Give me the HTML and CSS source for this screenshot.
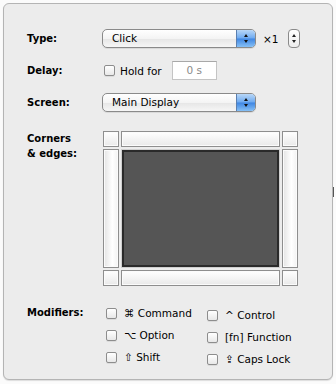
FILE: index.html
```html
<!DOCTYPE html>
<html lang="en">
<head>
    <meta charset="UTF-8">
    <title>Action settings</title>
    <link rel="stylesheet" href="styles.css">
</head>
<body>
    <div class="panel">
        <div class="row row-type">
            <div class="label">Type:</div>
            <div class="field">
                <div class="popup popup-type">
                    <span class="popup-text">Click</span>
                    <span class="popup-arrows">
                        <svg width="18" height="17" viewBox="0 0 18 17"><polygon points="7,7 11,7 9,4" fill="#111"/><polygon points="7,10 11,10 9,13" fill="#111"/></svg>
                    </span>
                </div>
                <span class="count">×1</span>
                <div class="stepper">
                    <svg width="10" height="17" viewBox="0 0 10 17"><polygon points="3,7 7,7 5,4" fill="#222"/><polygon points="3,10 7,10 5,13" fill="#222"/></svg>
                </div>
            </div>
        </div>

        <div class="row row-delay">
            <div class="label">Delay:</div>
            <div class="field">
                <span class="checkbox"></span>
                <span class="hold">Hold for</span>
                <div class="textfield">0 s</div>
            </div>
        </div>

        <div class="row row-screen">
            <div class="label">Screen:</div>
            <div class="field">
                <div class="popup popup-screen">
                    <span class="popup-text">Main Display</span>
                    <span class="popup-arrows">
                        <svg width="18" height="17" viewBox="0 0 18 17"><polygon points="7,7 11,7 9,4" fill="#111"/><polygon points="7,10 11,10 9,13" fill="#111"/></svg>
                    </span>
                </div>
            </div>
        </div>

        <div class="row row-corners">
            <div class="label label-top">Corners<br>&amp; edges:</div>
            <div class="corners">
                <div class="cell"></div>
                <div class="cell cell-h"></div>
                <div class="cell"></div>
                <div class="cell cell-v"></div>
                <div class="cell-center"><div class="screen"></div></div>
                <div class="cell cell-v"></div>
                <div class="cell"></div>
                <div class="cell cell-h"></div>
                <div class="cell"></div>
            </div>
        </div>

        <div class="row row-modifiers">
            <div class="label label-top label-mod">Modifiers:</div>
            <div class="modifiers">
                <label class="mod"><span class="checkbox"></span>⌘ Command</label>
                <label class="mod mod-right"><span class="checkbox"></span>^ Control</label>
                <label class="mod"><span class="checkbox"></span>⌥ Option</label>
                <label class="mod mod-right"><span class="checkbox"></span>[fn] Function</label>
                <label class="mod"><span class="checkbox"></span>⇧ Shift</label>
                <label class="mod mod-right"><span class="checkbox"></span>⇪ Caps Lock</label>
            </div>
        </div>
    </div>
    <div class="grip"></div>
</body>
</html>
```

FILE: styles.css
```css
body {
    margin: 0;
    padding: 3px;
    background-color: #fbfbfb;
    font-family: "DejaVu Sans", sans-serif;
    font-size: 10.5px;
    color: #000;
    position: relative;
    width: 336px;
    height: 384px;
    box-sizing: border-box;
}

.panel {
    width: 330px;
    height: 377px;
    box-sizing: border-box;
    background-color: #ececec;
    border: 1px solid #b4b4b4;
    border-radius: 6px;
    box-shadow: 0 1px 1px rgba(0, 0, 0, 0.12);
    padding: 25px 0 0 23px;
    display: flex;
    flex-direction: column;
}

.row {
    display: grid;
    grid-template-columns: 75px auto;
    align-items: center;
}

.row-type,
.row-delay,
.row-screen {
    height: 19px;
}

.row-delay,
.row-screen {
    margin-top: 13px;
}

.row-corners {
    margin-top: 19px;
    align-items: start;
}

.row-modifiers {
    margin-top: 16px;
    align-items: start;
}

.label {
    font-size: 10px;
    font-weight: bold;
}

.label-top {
    line-height: 15px;
}

.label-mod {
    line-height: 22px;
}

.field {
    display: flex;
    align-items: center;
}

/* popup buttons */
.popup {
    height: 19px;
    box-sizing: border-box;
    border: 1px solid #8a8a8a;
    border-radius: 5px;
    background: linear-gradient(#ffffff, #f4f4f4 50%, #e6e6e6 52%, #f6f6f6);
    display: flex;
    align-items: center;
    overflow: hidden;
    box-shadow: 0 1px 0 rgba(0, 0, 0, 0.08);
}

.popup-type,
.popup-screen {
    width: 154px;
}

.popup-text {
    flex: 1;
    padding-left: 9px;
    line-height: 17px;
}

.popup-arrows {
    width: 18px;
    height: 17px;
    border-left: 1px solid #5a7fb0;
    background: linear-gradient(#b9d7f7, #6eaaf0 48%, #3f86e2 52%, #86c0f6);
    display: flex;
}

.count {
    margin-left: 7px;
}

.stepper {
    margin-left: 10px;
    width: 12px;
    height: 19px;
    box-sizing: border-box;
    border: 1px solid #8a8a8a;
    border-radius: 4px;
    background: linear-gradient(#ffffff, #ededed);
    display: flex;
    justify-content: center;
}

/* checkboxes */
.checkbox {
    display: inline-block;
    width: 11px;
    height: 11px;
    box-sizing: border-box;
    border: 1px solid #8d8d8d;
    border-radius: 2px;
    background: linear-gradient(#ffffff, #e8e8e8);
    box-shadow: 0 1px 0 rgba(0, 0, 0, 0.07);
    flex: none;
}

.row-delay .checkbox {
    margin-left: 2px;
}

.hold {
    margin-left: 5px;
}

.textfield {
    margin-left: 10px;
    width: 45px;
    height: 19px;
    box-sizing: border-box;
    border: 1px solid #c4c4c4;
    border-top-color: #a8a8a8;
    background-color: #fff;
    color: #8a8a8a;
    text-align: center;
    line-height: 17px;
}

/* corners & edges */
.corners {
    display: grid;
    grid-template-columns: 16px 159px 16px;
    grid-template-rows: 16px 119px 16px;
    gap: 2px;
    margin-left: 1px;
}

.cell {
    box-sizing: border-box;
    border: 1px solid #8e8e8e;
    background: linear-gradient(#ffffff, #e9e9e9);
    box-shadow: inset 0 0 0 1px #fbfbfb;
}

.cell-v {
    background: linear-gradient(to right, #e4e4e4, #ffffff 60%, #f2f2f2);
}

.cell-center {
    box-sizing: border-box;
    border: 1px solid #cfcfcf;
    display: flex;
}

.screen {
    flex: 1;
    border: 2px solid #2a2a2a;
    background-color: #555555;
}

/* modifiers */
.modifiers {
    display: grid;
    grid-template-columns: 101px auto;
    grid-auto-rows: 22px;
    margin-left: 4px;
}

.mod {
    display: flex;
    align-items: center;
    gap: 7px;
}

.mod-right {
    position: relative;
    top: 2px;
}

.grip {
    position: absolute;
    left: 333px;
    top: 187px;
    width: 1px;
    height: 10px;
    background-color: #555;
}
```
